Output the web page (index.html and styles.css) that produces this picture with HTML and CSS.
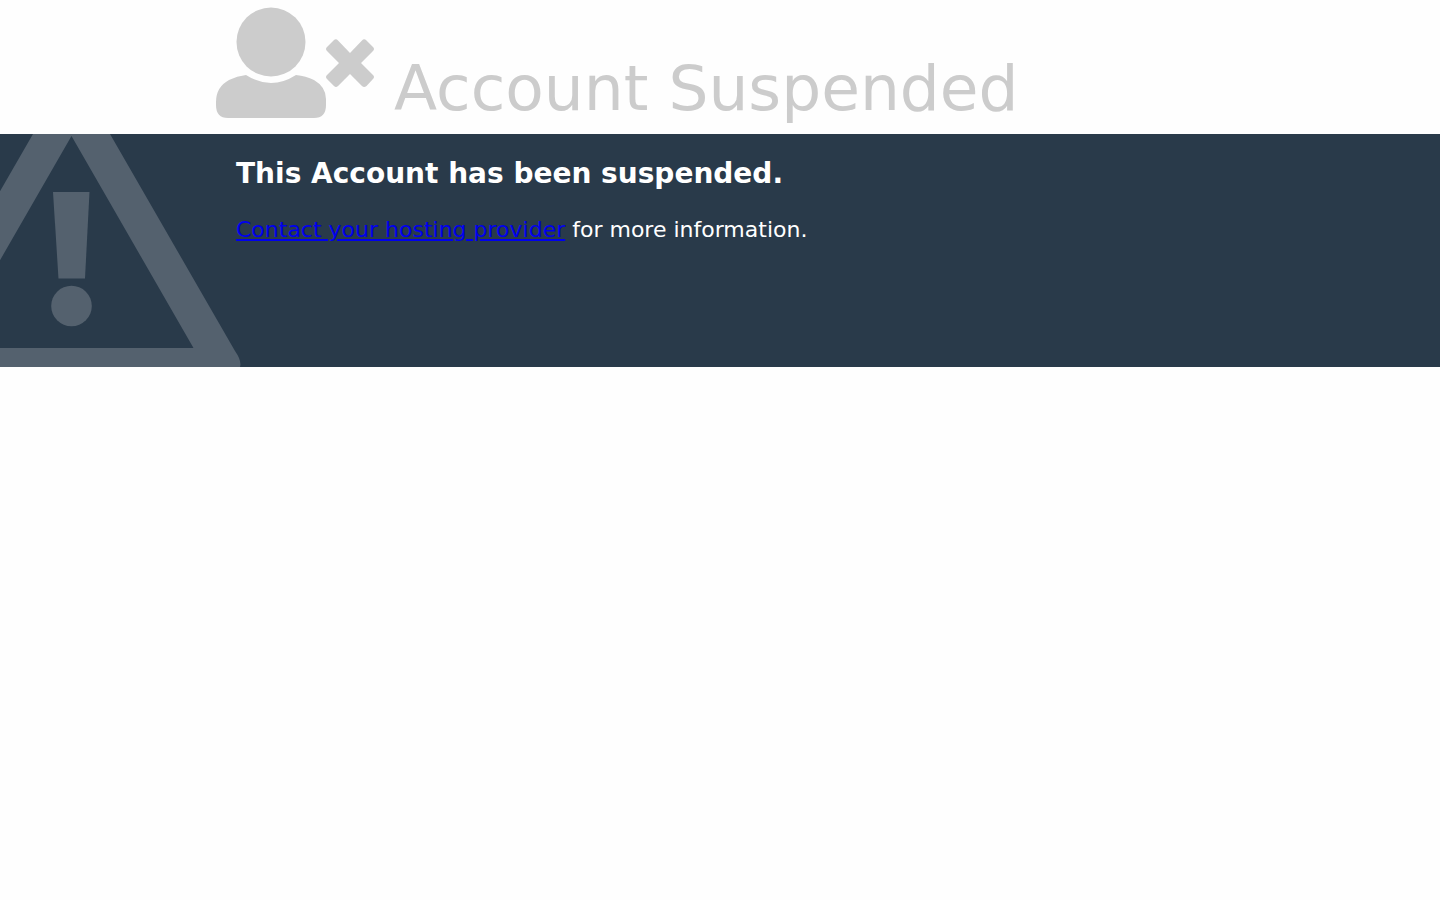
FILE: index.html
```html
<!DOCTYPE html>
<html lang="en">
<head>
  <meta charset="utf-8">
  <meta name="viewport" content="width=device-width, initial-scale=1">
  <title>Account Suspended</title>
  <link rel="stylesheet" href="styles.css">
</head>
<body>
  <header class="page-header">
    <div class="container status">
      <svg class="status-icon" viewBox="0 0 160 112" aria-hidden="true">
        <circle cx="56" cy="35" r="34.5"/>
        <path d="M31 68Q56 84 81 68Q91 69 99 73Q111 80 111 92V98Q111 111 99 111H13Q1 111 1 98V95Q1 80 14 73Q22 69 31 68Z"/>
        <path d="M118.500 33.500Q121 31 123 33.500L135 46L147 33.500Q149 31 151.500 33.500L158 40Q160 42 158 44L146 56L158 68Q160 70 158 72L151.500 79Q149 81 147 79L135 67L123 79Q121 81 119 79L112 72Q110 70 112 68L124 56L112 44Q110 42 112 40Z"/>
      </svg>
      <h1 class="status-title">Account Suspended</h1>
    </div>
  </header>
  <main class="notice">
    <svg class="notice-icon" viewBox="0 0 242 233" aria-hidden="true">
      <path fill-rule="evenodd" d="M33 0H110L235 217Q242 227 240 233H-97Q-99 227 -92 217ZM71.500 2L-50.500 214H193.500Z"/>
      <path d="M53 58H89.500L85 144.500H58.500Z"/>
      <circle cx="71.500" cy="172" r="20.300"/>
    </svg>
    <div class="container notice-body">
      <h2 class="notice-title">This Account has been suspended.</h2>
      <p class="notice-text"><a href="#contact">Contact your hosting provider</a> for more information.</p>
    </div>
  </main>
</body>
</html>
```
FILE: styles.css
```css
* {
  box-sizing: border-box;
}

body {
  margin: 0;
  background: #fefefe;
  color: #cccccc;
  font-family: "DejaVu Sans", sans-serif;
  font-size: 22px;
}

.container {
  width: 70%;
  margin: 0 auto;
}

.page-header {
  padding: 7px 0 8px;
}

.status {
  display: flex;
  align-items: flex-end;
  gap: 19px;
}

.status-icon {
  flex: none;
  width: 160px;
  height: 112px;
  margin: 0 0 7px -1px;
  fill: #cccccc;
}

.status-title {
  margin: 0;
  font-size: 63px;
  line-height: 74px;
  font-weight: 400;
}

.notice {
  position: relative;
  overflow: hidden;
  padding: 23px 0 121px;
  background: #293a4a;
  color: #ffffff;
}

.notice-icon {
  position: absolute;
  top: 0;
  left: 0;
  width: 242px;
  height: 233px;
  fill: #54616e;
}

.notice-body {
  position: relative;
  padding: 0 20px;
}

.notice-title {
  margin: 0 0 22px;
  font-size: 28px;
  line-height: 34px;
}

.notice-text {
  margin: 0;
  line-height: 33px;
}

.notice-text a {
  color: #0000ee;
}
```
